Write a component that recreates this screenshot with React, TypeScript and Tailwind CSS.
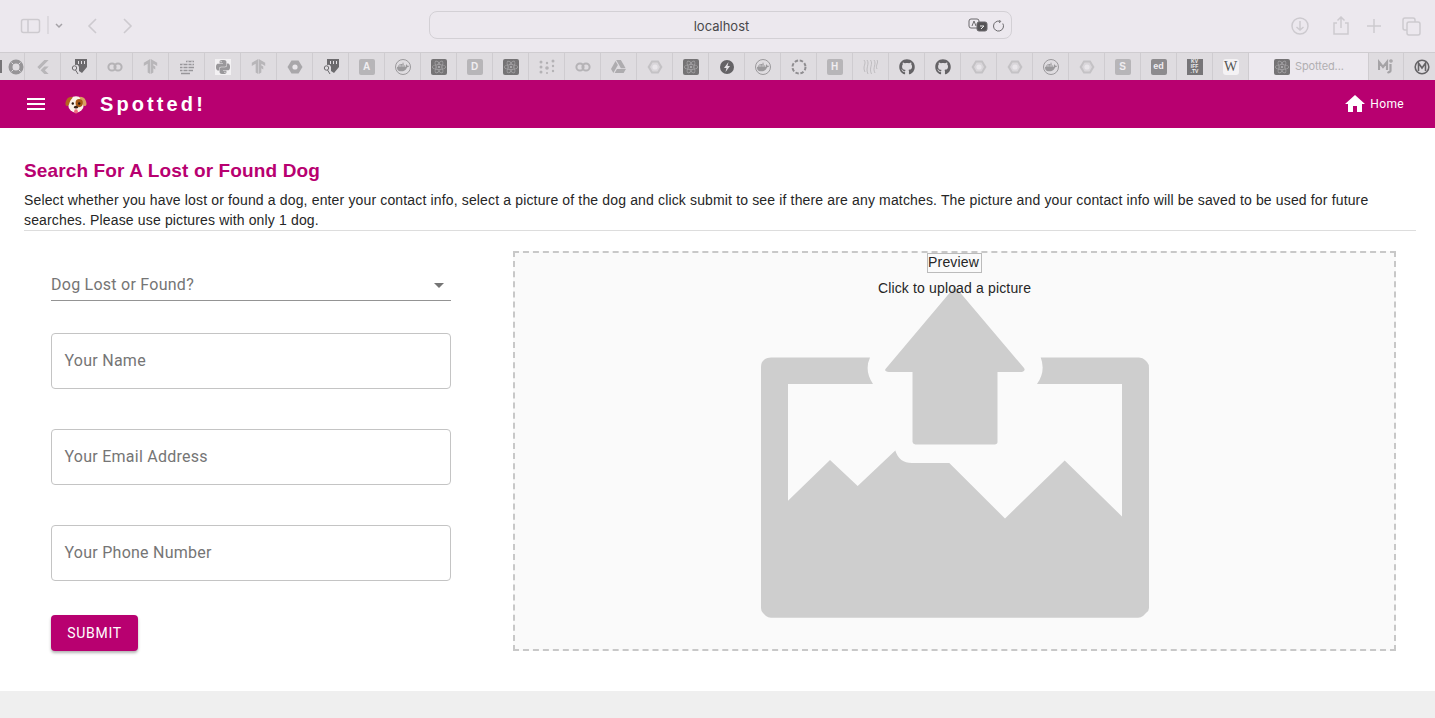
import React from 'react';
import { FaGithub } from 'react-icons/fa';
import { SiFlutter, SiReact, SiTensorflow, SiGoogledrive, SiDocker, SiPython } from 'react-icons/si';

const Letter: React.FC<{ text: string; dark?: boolean; size?: string }> = ({ text, dark, size }) => (
  <div className={`w-4 h-4 rounded-[2px] flex items-center justify-center font-bold text-[#f0edf0] ${dark ? 'bg-[#8d8b8e]' : 'bg-[#b7b5b8]'} ${size || 'text-[10px]'}`}>
    {text}
  </div>
);

const ReactSquare = () => (
  <div className="w-4 h-4 rounded-[2px] bg-[#757375] flex items-center justify-center">
    <SiReact className="w-[14px] h-[14px] text-[#a9a7aa]" />
  </div>
);

const Hexagon: React.FC<{ light?: boolean }> = ({ light }) => (
  <svg viewBox="0 0 16 16" className="w-4 h-4">
    <path d="M4.5 1.500h7L15.500 8l-4 6.500h-7L.5 8z" fill={light ? '#c4c2c5' : '#a9a7aa'} />
    {light && <path d="M5.500 3.500h5L13 8l-2.500 4.500h-5L3 8z" fill="#d9d6da" />}
    <circle cx="8" cy="8" r="2.600" fill="#e9e6ea" />
  </svg>
);

const Infinity8 = () => (
  <svg viewBox="0 0 16 16" className="w-4 h-4" fill="none" stroke="#b5b3b6" strokeWidth="2">
    <circle cx="5" cy="8" r="3.6" />
    <circle cx="11" cy="8" r="3.6" />
  </svg>
);

const Ring = () => (
  <svg viewBox="0 0 16 16" className="w-4 h-4">
    <circle cx="8" cy="8" r="5.500" fill="none" stroke="#969497" strokeWidth="4" />
    <path d="M3.500 3.500l2 2M12.500 3.500l-2 2M3.500 12.500l2-2M12.500 12.500l-2-2" stroke="#dedbe0" strokeWidth="1" />
  </svg>
);

const ShieldKey = () => (
  <svg viewBox="0 0 16 16" className="w-4 h-4">
    <path d="M4 0h12v8l-5 6-3-2V8a3 3 0 0 0-4-2z" fill="#6c6a6d" />
    <path d="M7 2h1v3H7zM10 2h1v3h-1zM13 2h1v3h-1z" fill="#e4e1e5" />
    <circle cx="3.500" cy="9" r="2.200" fill="none" stroke="#6c6a6d" strokeWidth="1" />
    <path d="M4.500 11l2.500 4" stroke="#6c6a6d" strokeWidth="1" />
  </svg>
);

const Bricks = () => (
  <svg viewBox="0 0 16 16" className="w-4 h-4" stroke="#98969a" strokeWidth="1.600">
    <path d="M7 2.500h8M1 5.500h14M1 8.500h14M1 11.500h13M2 14.500h9" />
    <path d="M4 5v8M9 2v11M13 2v4" stroke="#dedbe0" strokeWidth="1" />
  </svg>
);

const DockerRound = () => (
  <div className="w-4 h-4 rounded-full border border-[#9b999c] flex items-center justify-center">
    <SiDocker className="w-3 h-3 text-[#9b999c]" />
  </div>
);

const Dots = () => (
  <svg viewBox="0 0 16 16" className="w-4 h-4" fill="#b4b2b5">
    <circle cx="2" cy="3" r="1.500" />
    <circle cx="2" cy="8" r="1.500" />
    <circle cx="2" cy="13" r="1.500" />
    <circle cx="8" cy="4" r="1.200" />
    <circle cx="8" cy="9" r="1.800" />
    <circle cx="8" cy="14" r="1" />
    <circle cx="14" cy="2" r="1.500" />
    <circle cx="14" cy="7" r="1.200" />
    <circle cx="14" cy="12" r="1.200" />
  </svg>
);

const Bolt = () => (
  <svg viewBox="0 0 16 16" className="w-4 h-4">
    <circle cx="8" cy="8" r="7" fill="#656366" />
    <path d="M9.500 3L5 9h2.500l-1 4L11 7H8.500z" fill="#e4e1e5" />
  </svg>
);

const DashRing = () => (
  <svg viewBox="0 0 16 16" className="w-4 h-4">
    <circle cx="8" cy="8" r="6.500" fill="none" stroke="#8f8d90" strokeWidth="2" strokeDasharray="3.4 1.7" />
  </svg>
);

const Waves = () => (
  <svg viewBox="0 0 16 16" className="w-4 h-4" fill="none" stroke="#bab8bb" strokeWidth=".9">
    <path d="M1 1c3 4-2 6 1 12M4 1c3 4-2 8 1 14M7.500 1c3 4-2 8 1 14M11 1c3 4-2 8 1 13M14 1c2 3-2 5 0 9" />
  </svg>
);

const Kviff = () => (
  <div className="w-4 h-4 bg-[#777578] text-[#eee] font-bold text-[5px] leading-[5px] text-center overflow-hidden flex flex-col justify-center">
    <span>KV</span>
    <span>IFF</span>
    <span>.TV</span>
  </div>
);

const Wiki = () => (
  <div className="w-4 h-4 rounded-[3px] bg-[#f4f2f4] flex items-center justify-center font-['Liberation_Serif',serif] text-[14px] leading-none text-[#555]">
    W
  </div>
);

const Tab = ({ children }: { children: React.ReactNode }) => (
  <div className="w-9 h-full shrink-0 border-r border-[#cfccd0] flex items-center justify-center">{children}</div>
);

const tabs: React.ReactNode[] = [
  <SiFlutter className="w-[14px] h-[14px] text-[#b8b6b9]" />,
  <ShieldKey />,
  <Infinity8 />,
  <SiTensorflow className="w-[15px] h-[15px] text-[#b8b6b9]" />,
  <Bricks />,
  <div className="w-4 h-4 bg-[#f3f1f3] flex items-center justify-center"><SiPython className="w-[14px] h-[14px] text-[#9a989b]" /></div>,
  <SiTensorflow className="w-[15px] h-[15px] text-[#b8b6b9]" />,
  <Hexagon />,
  <ShieldKey />,
  <Letter text="A" />,
  <DockerRound />,
  <ReactSquare />,
  <Letter text="D" />,
  <ReactSquare />,
  <Dots />,
  <Infinity8 />,
  <SiGoogledrive className="w-[15px] h-[15px] text-[#aeacaf]" />,
  <Hexagon light />,
  <ReactSquare />,
  <Bolt />,
  <DockerRound />,
  <DashRing />,
  <Letter text="H" />,
  <Waves />,
  <FaGithub className="w-4 h-4 text-[#656366]" />,
  <FaGithub className="w-4 h-4 text-[#656366]" />,
  <Hexagon light />,
  <Hexagon light />,
  <DockerRound />,
  <Hexagon light />,
  <Letter text="S" />,
  <Letter text="ed" dark size="text-[9px]" />,
  <Kviff />,
  <Wiki />,
];

const BrowserBar = () => (
  <div className="h-[52px] bg-[#ece8ee] flex items-center shrink-0">
    <svg viewBox="0 -2 140 20" className="w-[140px] h-5 ml-[20px] shrink-0" fill="none" stroke="#cdcacf" strokeWidth="1.5">
      <rect x="1.500" y="1.500" width="18" height="13" rx="2" />
      <path d="M8 1.500v13" />
      <path d="M28 -2v18" strokeWidth="1" />
      <path d="M36 6l3 3 3-3" stroke="#a5a2a7" />
      <path d="M76 1l-7 7 7 7M104 1l7 7-7 7" strokeWidth="1.600" />
    </svg>
    <div className="ml-[269px] -mt-[2px] w-[583px] h-[28px] border border-[#d3d0d5] rounded-lg flex items-center relative shrink-0">
      <span className="w-full pl-[2px] pt-[4px] text-center text-[13px] text-[#4a484b] font-['Inter',sans-serif]">localhost</span>
      <svg viewBox="0 0 20 16" className="absolute right-[23px] top-[6px] w-5 h-4" fill="none" stroke="#6b696c" strokeWidth="1">
        <rect x="1" y="1" width="10" height="9" rx="2" fill="#ece8ee" />
        <rect x="9" y="4" width="10" height="9" rx="2" fill="#555356" />
        <path d="M4 8l2-5 2 5" />
        <path d="M12 8h4M13 11l3-3" stroke="#eee" />
      </svg>
      <svg viewBox="0 0 12 12" className="absolute right-[6px] top-[8px] w-3 h-3" fill="none" stroke="#6b696c" strokeWidth="1">
        <path d="M9.800 3.500a5 5 0 1 1-2.800-2.200" />
        <path d="M6.200 0l1.600 1.400L6.200 3" />
      </svg>
    </div>
    <svg viewBox="0 -1 132 20" className="w-[132px] h-5 ml-[279px] shrink-0" fill="none" stroke="#cdcacf" strokeWidth="1.5">
      <circle cx="9" cy="9" r="8" />
      <path d="M9 4v9M5.500 10L9 13l3.500-3" />
      <path d="M46 6l-3 0v11h14V6h-3M50 0v11M46.500 3.500L50 0l3.500 3.500" />
      <path d="M83 2v14M76 9h14" />
      <rect x="112" y="1" width="12" height="12" rx="2" />
      <rect x="116" y="5" width="13" height="13" rx="2" fill="#ece8ee" />
    </svg>
  </div>
);

const TabStrip = () => (
  <div className="h-[28px] bg-[#dfdce0] border-t border-[#cfccd0] flex items-stretch shrink-0 overflow-hidden">
    <div className="w-[25px] h-full shrink-0 border-r border-[#cfccd0] flex items-center justify-end relative">
      <div className="absolute left-0 top-[7px] w-[2px] h-[13px] bg-[#777578]" />
      <Ring />
    </div>
    {tabs.map((icon, i) => (
      <Tab key={i}>{icon}</Tab>
    ))}
    <div className="w-[119px] shrink-0 bg-[#ece8ee] flex items-center pl-[25px] gap-[5px]">
      <ReactSquare />
      <span className="text-[11px] text-[#b1afb2] font-['Inter',sans-serif] tracking-[-0.01em]">Spotted...</span>
    </div>
    <div className="w-9 shrink-0 border-r border-l border-[#cfccd0] flex items-center justify-center">
      <svg viewBox="0 0 16 16" className="w-4 h-4" fill="none" stroke="#a5a3a6" strokeWidth="2.200">
        <path d="M1 11V3l4 5 4-5v8M12.500 5v6a2 2 0 0 1-3 2" />
        <circle cx="13" cy="2" r=".7" />
      </svg>
    </div>
    <div className="w-9 shrink-0 flex items-center justify-center">
      <svg viewBox="0 0 16 16" className="w-4 h-4" fill="none" stroke="#656366" strokeWidth="1.600">
        <circle cx="8" cy="8" r="6.800" />
        <path d="M4.500 12V4l3.500 5 3.500-5v8" />
      </svg>
    </div>
  </div>
);

const DogFace = () => (
  <svg viewBox="0 0 24 24" className="w-[22px] h-[22px]">
    <ellipse cx="12" cy="12.500" rx="8.500" ry="9" fill="#fbf3e8" />
    <path d="M7 4C3 4 .5 8 .5 12c.5 3 3 3 4 0 1-3 2-5 4-7z" fill="#b4641e" />
    <path d="M17 4c4 0 6.500 4 6.500 8-.5 3-3 3-4 0-1-3-2-5-4-7z" fill="#d9a05f" />
    <ellipse cx="15.500" cy="11" rx="4" ry="4.500" fill="#a95a16" />
    <circle cx="8.500" cy="11.500" r="1.300" fill="#2a1a10" />
    <circle cx="15.500" cy="11.500" r="1.300" fill="#2a1a10" />
    <ellipse cx="12" cy="15.500" rx="2.200" ry="1.500" fill="#3a2418" />
    <ellipse cx="12" cy="20" rx="2" ry="2.400" fill="#ef6a7e" />
  </svg>
);

const AppBar = () => (
  <header className="h-[48px] bg-[#b80070] flex items-center text-white shrink-0">
    <svg viewBox="0 0 24 24" className="ml-[24px] w-6 h-6" fill="currentColor">
      <path d="M3 18h18v-2H3zm0-5h18v-2H3zm0-7v2h18V6z" />
    </svg>
    <div className="ml-[17px]"><DogFace /></div>
    <span className="ml-[13px] text-[20px] font-bold tracking-[0.155em]">Spotted!</span>
    <div className="ml-auto mr-[31px] flex items-center gap-[3px]">
      <svg viewBox="0 0 24 24" className="w-6 h-6" fill="currentColor">
        <path d="M10 20v-6h4v6h5v-8h3L12 3 2 12h3v8z" />
      </svg>
      <span className="text-[12px] font-['Roboto',sans-serif] tracking-[0.03em]">Home</span>
    </div>
  </header>
);

const OutlinedField: React.FC<{ label: string }> = ({ label }) => (
  <div className="h-[56px] w-[400px] border border-[#c4c4c4] rounded-[4px] flex items-center pl-[12.5px] text-[16px] text-[#757575] tracking-[0.016em] font-['Roboto',sans-serif]">
    {label}
  </div>
);

const UploadIcon = () => (
  <svg viewBox="761 286 388 332" className="w-[388px] h-[332px] -mt-[12px] shrink-0" fill="#cecece">
    <path d="M955 286.500L1024 368q2 3-2 4h-24.500v70q0 2-3 2.500h-79q-2.500-.5-3-2.500v-70H889q-5-.5-3.500-3z" />
    <path d="M771 357.500h99q-6 13 3 26.500H788v116.700l42-40.700 27.700 26 37.600-35.500q4 13 17.700 12.500h36.300l55.700 55.500 59.700-58 57.300 56V384H1037q9-13 3.700-26.500H1139q4 0 6 2.500l2 2q2 2 2 6V608q0 3-3 5l-3 3q-2 1.700-5 1.700H771q-3 0-5-1.700l-3-3q-2-2-2-5V367q0-5 3-7l1-1q2-1.500 6-1.500z" />
  </svg>
);

const App: React.FC = () => {
  return (
    <div className="w-[1435px] h-[718px] overflow-hidden flex flex-col bg-[#efefef] font-['Liberation_Sans',sans-serif]">
      <BrowserBar />
      <TabStrip />
      <AppBar />
      <main className="h-[563px] bg-white shrink-0 pt-[31px] pl-[24px] pr-[19px]">
        <h1 className="text-[19px] leading-[24px] font-bold text-[#b80070] tracking-[0.007em]">Search For A Lost or Found Dog</h1>
        <p className="mt-[7px] text-[14px] leading-[20px] text-[#262626] tracking-[0.01071em] border-b border-[#dddddd]">
          Select whether you have lost or found a dog, enter your contact info, select a picture of the dog and click submit to see if there are any matches. The picture and your contact info will be saved to be used for future searches. Please use pictures with only 1 dog.
        </p>
        <div className="flex mt-[20px]">
          <form className="w-[400px] ml-[27px] shrink-0 pt-[15px]">
            <div className="h-[35px] border-b border-[#949494] flex items-center justify-between pt-[3px] text-[16px] text-[#757575] tracking-[0.016em] font-['Roboto',sans-serif]">
              <span>Dog Lost or Found?</span>
              <span className="w-0 h-0 mr-[7px] mt-[1px] border-x-[5px] border-x-transparent border-t-[5px] border-t-[#757575]" />
            </div>
            <div className="mt-[32px] flex flex-col gap-[40px]">
              <OutlinedField label="Your Name" />
              <OutlinedField label="Your Email Address" />
              <OutlinedField label="Your Phone Number" />
            </div>
            <button type="button" className="mt-[34px] w-[87px] h-[36px] rounded-[4px] bg-[#b80070] text-white text-[14px] tracking-[0.05em] font-['Roboto',sans-serif] shadow-[0_2px_3px_rgba(0,0,0,0.3)]">
              SUBMIT
            </button>
          </form>
          <div className="ml-[62px] w-[883px] h-[400px] border-2 border-dashed border-[#c8c8c8] bg-[#fafafa] flex flex-col items-center overflow-hidden">
            <div className="w-[55px] h-[20px] border border-[#bbbbbb] pr-[2px] text-[14px] leading-[16px] text-center text-[#262626] tracking-[0.01071em]">Preview</div>
            <p className="relative z-10 mt-[5px] text-[14px] leading-[20px] text-[#262626] tracking-[0.01071em]">Click to upload a picture</p>
            <UploadIcon />
          </div>
        </div>
      </main>
    </div>
  );
};

export default App;
